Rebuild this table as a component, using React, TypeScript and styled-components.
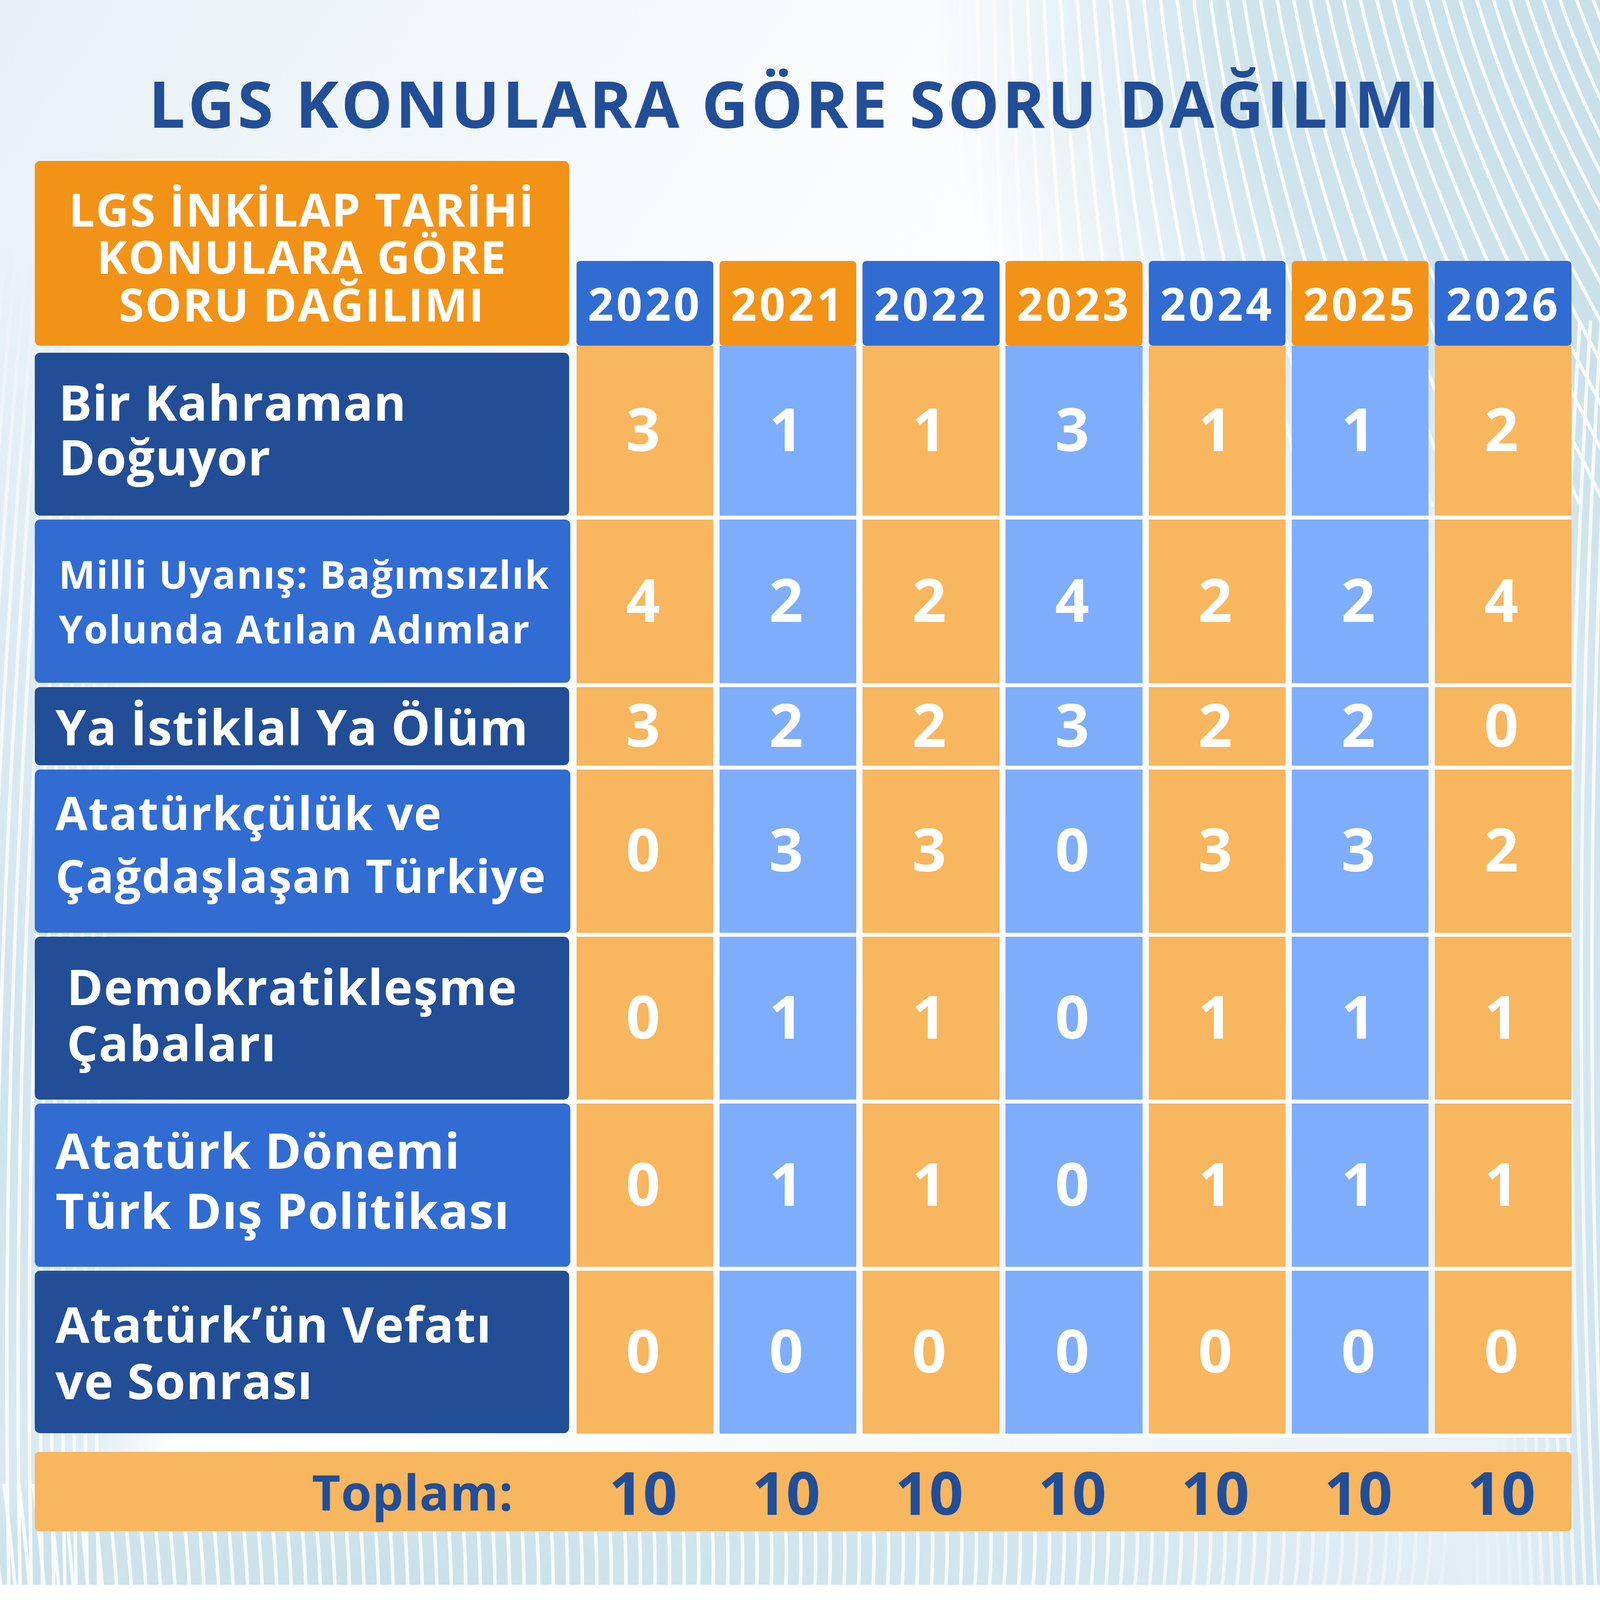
import React from 'react';
import styled, { createGlobalStyle } from 'styled-components';

const W = 5995;
const H = 5938;

const GlobalStyle = createGlobalStyle`
  html, body {
    margin: 0;
    padding: 0;
    overflow: hidden;
  }
  body {
    font-family: 'Open Sans', 'Noto Sans', sans-serif;
  }
`;

const colors = {
    navy: '#224e97',
    blue: '#316cd3',
    sky: '#7eadfc',
    orange: '#f29318',
    peach: '#f8b65e',
};

type Tone = 'navy' | 'blue';

const years = ['2020', '2021', '2022', '2023', '2024', '2025', '2026'];

const rows = [
    { lines: ['Bir Kahraman', 'Doğuyor'], tone: 'navy', h: 610, size: 185, lh: 205, pad: 90, lift: 20, ls: 2, first: true, vals: [3, 1, 1, 3, 1, 1, 2] },
    { lines: ['Milli Uyanış: Bağımsızlık', 'Yolunda Atılan Adımlar'], tone: 'blue', h: 612, size: 145, lh: 205, pad: 90, lift: 0, ls: 4, vals: [4, 2, 2, 4, 2, 2, 4] },
    { lines: ['Ya İstiklal Ya Ölüm'], tone: 'navy', h: 294, size: 185, lh: 205, pad: 78, lift: 0, ls: 2, vals: [3, 2, 2, 3, 2, 2, 0] },
    { lines: ['Atatürkçülük ve', 'Çağdaşlaşan Türkiye'], tone: 'blue', h: 612, size: 174, lh: 236, pad: 78, lift: 27, ls: 3, vals: [0, 3, 3, 0, 3, 3, 2] },
    { lines: ['Demokratikleşme', 'Çabaları'], tone: 'navy', h: 610, size: 184, lh: 211, pad: 120, lift: 14, ls: 3, vals: [0, 1, 1, 0, 1, 1, 1] },
    { lines: ['Atatürk Dönemi', 'Türk Dış Politikası'], tone: 'blue', h: 612, size: 185, lh: 225, pad: 78, lift: 19, ls: 2, vals: [0, 1, 1, 0, 1, 1, 1] },
    { lines: ['Atatürk’ün Vefatı', 've Sonrası'], tone: 'navy', h: 609, size: 185, lh: 213, pad: 78, lift: 0, ls: 2, vals: [0, 0, 0, 0, 0, 0, 0] },
];

// background stripes
const fanTop = Array.from({ length: 40 }, (_, i) => {
    const x = 3600 + i * 62;
    const d = x - 3600;
    return `M${x} -40 C${x + d * 0.08} 500 ${x + d * 0.22} 1000 ${x + d * 0.5} 1900`;
});
const edgeRight = Array.from({ length: 14 }, (_, i) => {
    const x = 5560 + i * 40;
    return `M${x} 1200 Q${x - 140} 3400 ${x - 20} 5980`;
});
const edgeLeft = Array.from({ length: 16 }, (_, i) => {
    const x = -260 + i * 42;
    return `M${x} 5980 Q${x - 60} 3000 ${x + 300} -40`;
});
const bottomBand = Array.from({ length: 100 }, (_, i) => {
    const x = -40 + i * 55;
    return `M${x} 5560 Q${x + 25} 5760 ${x + 45 - i * 0.6} 5980`;
});

const Page = styled.div`
    position: relative;
    width: ${W}px;
    height: ${H}px;
    overflow: hidden;
    background: linear-gradient(125deg, #e6f0f5 0%, #f7fafc 28%, #ffffff 50%, #f4f9fb 72%, #e4eff5 100%);
    font-family: 'Open Sans', 'Noto Sans', sans-serif;
`;

const Backdrop = styled.svg`
    position: absolute;
    top: 0;
    left: 0;
    width: ${W}px;
    height: ${H}px;
`;

const Content = styled.div`
    position: relative;
    padding: 263px 107px 0 130px;
    display: flex;
    flex-direction: column;
`;

const Title = styled.h1`
    margin: 0 0 97px;
    padding-right: 58px;
    font-size: 243px;
    line-height: 1;
    font-weight: 700;
    letter-spacing: 10px;
    color: ${colors.navy};
    text-align: center;
    white-space: nowrap;
`;

const Table = styled.div`
    display: flex;
    flex-direction: column;
`;

const Row = styled.div`
    display: grid;
    grid-template-columns: 2007px 1fr;
    column-gap: 23px;
`;

const HeaderRow = styled(Row)`
    align-items: end;
`;

const HeadBox = styled.div`
    box-sizing: border-box;
    width: 2002px;
    height: 693px;
    padding-top: 22px;
    border-radius: 20px;
    background: ${colors.orange};
    color: #ffffff;
    display: flex;
    align-items: center;
    justify-content: center;
    text-align: center;
    font-size: 172px;
    line-height: 178px;
    font-weight: 700;
    letter-spacing: 4px;
    white-space: nowrap;
`;

const YearStrip = styled.div`
    display: flex;
    gap: 23px;
`;

const YearCell = styled.div<{ $alt: boolean }>`
    width: 513px;
    height: 319px;
    border-radius: 14px;
    background: ${p => (p.$alt ? colors.orange : colors.blue)};
    color: #ffffff;
    display: flex;
    align-items: center;
    justify-content: center;
    font-size: 170px;
    font-weight: 700;
    letter-spacing: 10px;
`;

const Label = styled.div<{ $tone: Tone; $h: number; $first?: boolean; $size: number; $lh: number; $pad: number; $lift: number; $ls: number }>`
    box-sizing: border-box;
    width: ${p => (p.$tone === 'navy' ? 2002 : 2007)}px;
    height: ${p => p.$h}px;
    margin: ${p => (p.$first ? 26 : 0)}px 0 15px;
    padding: 0 0 ${p => p.$lift * 2}px ${p => p.$pad}px;
    border-radius: 20px;
    background: ${p => (p.$tone === 'navy' ? colors.navy : colors.blue)};
    color: #ffffff;
    display: flex;
    flex-direction: column;
    justify-content: center;
    font-size: ${p => p.$size}px;
    line-height: ${p => p.$lh}px;
    font-weight: 700;
    letter-spacing: ${p => p.$ls}px;
    white-space: nowrap;
`;

const Cells = styled.div`
    display: flex;
    gap: 23px;
    border-bottom: 15px solid #ffffff;
`;

const Cell = styled.div<{ $alt: boolean }>`
    box-sizing: border-box;
    width: 513px;
    padding: 0 14px 20px 0;
    background: ${p => (p.$alt ? colors.sky : colors.peach)};
    color: #ffffff;
    display: flex;
    align-items: center;
    justify-content: center;
    font-size: 224px;
    line-height: 1;
    font-weight: 700;
`;

const TotalRow = styled(Row)`
    margin-top: 54px;
    height: 298px;
    border-radius: 16px;
    background: ${colors.peach};
    color: ${colors.navy};
    font-weight: 700;
    align-items: center;
`;

const TotalLabel = styled.div`
    padding-right: 213px;
    text-align: right;
    font-size: 185px;
    line-height: 1;
    letter-spacing: 2px;
`;

const TotalCells = styled.div`
    display: flex;
    gap: 23px;
`;

const TotalCell = styled.div`
    box-sizing: border-box;
    width: 513px;
    padding-right: 14px;
    text-align: center;
    font-size: 224px;
    line-height: 1;
`;

const Background = () => (
    <Backdrop viewBox={`0 0 ${W} ${H}`}>
        <defs>
            <radialGradient id="gTR" gradientUnits="userSpaceOnUse" cx={W} cy={0} r={2500}>
                <stop offset="0" stopColor="#fff" stopOpacity="1" />
                <stop offset="0.55" stopColor="#fff" stopOpacity="0.9" />
                <stop offset="1" stopColor="#fff" stopOpacity="0" />
            </radialGradient>
            <radialGradient
                id="gL"
                gradientUnits="userSpaceOnUse"
                cx={0}
                cy={4300}
                r={3400}
                gradientTransform="translate(0 4300) scale(0.2 1) translate(0 -4300)"
            >
                <stop offset="0" stopColor="#fff" stopOpacity="0.9" />
                <stop offset="0.6" stopColor="#fff" stopOpacity="0.5" />
                <stop offset="1" stopColor="#fff" stopOpacity="0" />
            </radialGradient>
            <linearGradient id="gR" gradientUnits="userSpaceOnUse" x1={W} y1={0} x2={5600} y2={0}>
                <stop offset="0" stopColor="#fff" stopOpacity="0.8" />
                <stop offset="1" stopColor="#fff" stopOpacity="0" />
            </linearGradient>
            <radialGradient
                id="gB"
                gradientUnits="userSpaceOnUse"
                cx={1400}
                cy={H}
                r={1500}
                gradientTransform={`translate(1400 ${H}) scale(3 1) translate(-1400 -${H})`}
            >
                <stop offset="0" stopColor="#fff" stopOpacity="1" />
                <stop offset="0.6" stopColor="#fff" stopOpacity="0.75" />
                <stop offset="1" stopColor="#fff" stopOpacity="0" />
            </radialGradient>
            <linearGradient id="gBv" gradientUnits="userSpaceOnUse" x1={0} y1={5500} x2={0} y2={5760}>
                <stop offset="0" stopColor="#000" />
                <stop offset="1" stopColor="#fff" />
            </linearGradient>
            <mask id="bandMask" maskUnits="userSpaceOnUse" x={0} y={0} width={W} height={H}>
                <rect width={W} height={H} fill="url(#gBv)" />
            </mask>
            <mask id="stripeMask" maskUnits="userSpaceOnUse" x={0} y={0} width={W} height={H}>
                <rect width={W} height={H} fill="#000" />
                <rect width={W} height={H} fill="url(#gTR)" />
                <rect width={W} height={H} fill="url(#gL)" />
                <rect width={W} height={H} fill="url(#gR)" />
                <rect width={W} height={H} fill="url(#gB)" mask="url(#bandMask)" />
            </mask>
        </defs>
        <g mask="url(#stripeMask)">
            <rect width={W} height={H} fill="#c9e0ea" />
            <g fill="none" stroke="#f7fbfc" strokeWidth={13}>
                {fanTop.map((d, i) => <path key={`t${i}`} d={d} />)}
                {edgeRight.map((d, i) => <path key={`r${i}`} d={d} />)}
                {edgeLeft.map((d, i) => <path key={`l${i}`} d={d} />)}
                {bottomBand.map((d, i) => <path key={`b${i}`} d={d} />)}
            </g>
        </g>
    </Backdrop>
);

// the artboard is drawn at its native size, then fitted to the window
const fitScale = () => {
    if (typeof window === 'undefined') return 1;
    return Math.min(window.innerWidth / W, window.innerHeight / H);
};

const App = () => {
    const [scale, setScale] = React.useState(fitScale);
    React.useEffect(() => {
        const onResize = () => setScale(fitScale());
        window.addEventListener('resize', onResize);
        return () => window.removeEventListener('resize', onResize);
    }, []);

    return (
        <Page style={{ zoom: scale }}>
            <GlobalStyle />
            <Background />
            <Content>
                <Title>LGS KONULARA GÖRE SORU DAĞILIMI</Title>
                <Table>
                    <HeaderRow>
                        <HeadBox>
                            LGS İNKİLAP TARİHİ<br />KONULARA GÖRE<br />SORU DAĞILIMI
                        </HeadBox>
                        <YearStrip>
                            {years.map((y, i) => (
                                <YearCell key={y} $alt={i % 2 === 1}>{y}</YearCell>
                            ))}
                        </YearStrip>
                    </HeaderRow>
                    {rows.map((r, ri) => (
                        <Row key={ri}>
                            <Label
                                $tone={r.tone as Tone}
                                $h={r.h}
                                $first={r.first}
                                $size={r.size}
                                $lh={r.lh}
                                $pad={r.pad}
                                $lift={r.lift}
                                $ls={r.ls}
                            >
                                {r.lines.map(l => <span key={l}>{l}</span>)}
                            </Label>
                            <Cells>
                                {r.vals.map((v, ci) => (
                                    <Cell key={ci} $alt={ci % 2 === 1}>{v}</Cell>
                                ))}
                            </Cells>
                        </Row>
                    ))}
                    <TotalRow>
                        <TotalLabel>Toplam:</TotalLabel>
                        <TotalCells>
                            {years.map(y => <TotalCell key={y}>10</TotalCell>)}
                        </TotalCells>
                    </TotalRow>
                </Table>
            </Content>
        </Page>
    );
};

export default App;
